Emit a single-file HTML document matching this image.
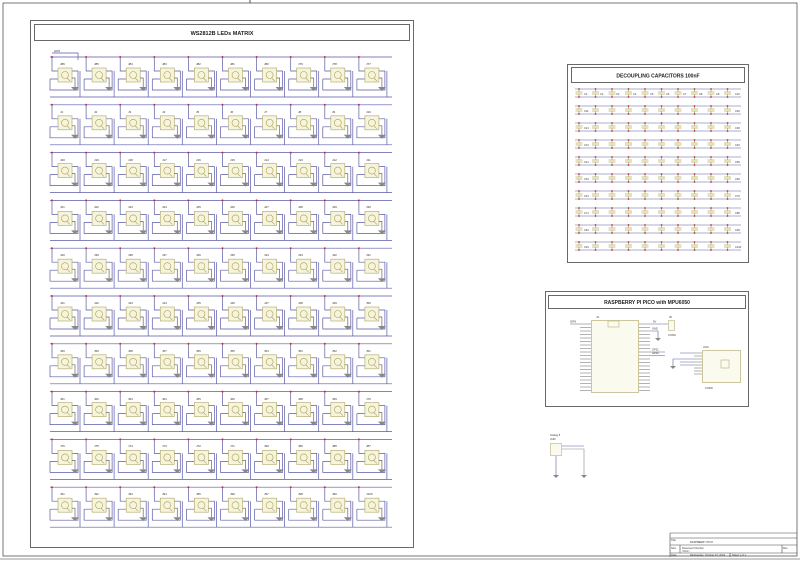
<!DOCTYPE html>
<html><head><meta charset="utf-8"><style>
html,body{margin:0;padding:0;background:#fff}
svg{display:block;font-family:"Liberation Sans",sans-serif}
</style></head><body>
<svg width="800" height="562" viewBox="0 0 800 562" xmlns="http://www.w3.org/2000/svg">
<defs>
<g id="cell">
 <path d="M-6,-11V3H0M-8,11H0M-8,11V22H20V3H14M22,3V29" fill="none" stroke="#5a5aa8" stroke-width="0.7"/>
 <rect x="0" y="0" width="14" height="14" fill="#f6f4da" stroke="#b8b07a" stroke-width="0.7"/>
 <circle cx="7" cy="7" r="3.5" fill="none" stroke="#a89e60" stroke-width="0.6"/>
 <path d="M9,10L12,13" stroke="#a89e60" stroke-width="0.6"/>
 <path d="M14,10H17V19" stroke="#666" stroke-width="0.7" fill="none"/>
 <path d="M13,19H21L17,23Z" fill="#888"/>
 <circle cx="-6" cy="-11" r="1" fill="#c03040"/>
</g>
<g id="row">
 <path d="M50,-11H392M50,29H392" stroke="#5a5aa8" stroke-width="0.7"/>
 <use href="#cell" x="58"/><use href="#cell" x="92.1"/><use href="#cell" x="126.2"/><use href="#cell" x="160.3"/><use href="#cell" x="194.4"/><use href="#cell" x="228.5"/><use href="#cell" x="262.6"/><use href="#cell" x="296.7"/><use href="#cell" x="330.8"/><use href="#cell" x="364.9"/>
</g>
<g id="cap">
 <path d="M0,0V3M-3.5,3H3.5M-3.5,5H3.5M0,5V8" stroke="#b8b060" stroke-width="0.8"/>
 <circle cx="0" cy="0" r="0.9" fill="#c03040"/><circle cx="0" cy="8" r="0.9" fill="#c03040"/>
</g>
<g id="crow">
 <path d="M575,0H741M575,8H741" stroke="#5a5aa8" stroke-width="0.6"/>
 <use href="#cap" x="579"/><use href="#cap" x="595.5"/><use href="#cap" x="612"/><use href="#cap" x="628.5"/><use href="#cap" x="645"/><use href="#cap" x="661.5"/><use href="#cap" x="678"/><use href="#cap" x="694.5"/><use href="#cap" x="711"/><use href="#cap" x="727.5"/>
</g>
</defs>
<rect x="3" y="3" width="794" height="553" fill="none" stroke="#555" stroke-width="0.8"/>
<line x1="0" y1="559" x2="800" y2="559" stroke="#999" stroke-width="1"/>
<line x1="250" y1="0" x2="250" y2="3" stroke="#555"/>
<rect x="30.5" y="20.5" width="383" height="527" fill="none" stroke="#444" stroke-width="0.8"/>
<rect x="34.5" y="24.5" width="375" height="16" fill="none" stroke="#444" stroke-width="0.8"/>
<text x="222" y="35" font-size="5.5" font-weight="bold" text-anchor="middle" fill="#222">WS2812B LEDs MATRIX</text>
<path d="M52,53H78V60" stroke="#5a5aa8" stroke-width="0.7" fill="none"/>
<text x="54" y="52" font-size="3" fill="#333">GP6</text>
<g font-size="3" fill="#333">
<use href="#row" y="68"/><use href="#row" y="115.8"/><use href="#row" y="163.6"/><use href="#row" y="211.4"/><use href="#row" y="259.2"/><use href="#row" y="307"/><use href="#row" y="354.8"/><use href="#row" y="402.6"/><use href="#row" y="450.4"/><use href="#row" y="498.2"/>
<text x="60" y="65">J86</text><text x="94" y="65">J85</text><text x="128" y="65">J84</text><text x="162" y="65">J83</text><text x="196" y="65">J82</text><text x="230" y="65">J81</text><text x="264" y="65">J80</text><text x="298" y="65">J79</text><text x="332" y="65">J78</text><text x="366" y="65">J77</text>
<text x="60" y="113">J1</text><text x="94" y="113">J2</text><text x="128" y="113">J3</text><text x="162" y="113">J4</text><text x="196" y="113">J5</text><text x="230" y="113">J6</text><text x="264" y="113">J7</text><text x="298" y="113">J8</text><text x="332" y="113">J9</text><text x="366" y="113">J10</text>
<text x="60" y="161">J20</text><text x="94" y="161">J19</text><text x="128" y="161">J18</text><text x="162" y="161">J17</text><text x="196" y="161">J16</text><text x="230" y="161">J15</text><text x="264" y="161">J14</text><text x="298" y="161">J13</text><text x="332" y="161">J12</text><text x="366" y="161">J11</text>
<text x="60" y="208">J21</text><text x="94" y="208">J22</text><text x="128" y="208">J23</text><text x="162" y="208">J24</text><text x="196" y="208">J25</text><text x="230" y="208">J26</text><text x="264" y="208">J27</text><text x="298" y="208">J28</text><text x="332" y="208">J29</text><text x="366" y="208">J30</text>
<text x="60" y="256">J40</text><text x="94" y="256">J39</text><text x="128" y="256">J38</text><text x="162" y="256">J37</text><text x="196" y="256">J36</text><text x="230" y="256">J35</text><text x="264" y="256">J34</text><text x="298" y="256">J33</text><text x="332" y="256">J32</text><text x="366" y="256">J31</text>
<text x="60" y="304">J41</text><text x="94" y="304">J42</text><text x="128" y="304">J43</text><text x="162" y="304">J44</text><text x="196" y="304">J45</text><text x="230" y="304">J46</text><text x="264" y="304">J47</text><text x="298" y="304">J48</text><text x="332" y="304">J49</text><text x="366" y="304">J50</text>
<text x="60" y="352">J60</text><text x="94" y="352">J59</text><text x="128" y="352">J58</text><text x="162" y="352">J57</text><text x="196" y="352">J56</text><text x="230" y="352">J55</text><text x="264" y="352">J54</text><text x="298" y="352">J53</text><text x="332" y="352">J52</text><text x="366" y="352">J51</text>
<text x="60" y="400">J61</text><text x="94" y="400">J62</text><text x="128" y="400">J63</text><text x="162" y="400">J64</text><text x="196" y="400">J65</text><text x="230" y="400">J66</text><text x="264" y="400">J67</text><text x="298" y="400">J68</text><text x="332" y="400">J69</text><text x="366" y="400">J70</text>
<text x="60" y="447">J76</text><text x="94" y="447">J75</text><text x="128" y="447">J74</text><text x="162" y="447">J73</text><text x="196" y="447">J72</text><text x="230" y="447">J71</text><text x="264" y="447">J90</text><text x="298" y="447">J89</text><text x="332" y="447">J88</text><text x="366" y="447">J87</text>
<text x="60" y="495">J91</text><text x="94" y="495">J92</text><text x="128" y="495">J93</text><text x="162" y="495">J94</text><text x="196" y="495">J95</text><text x="230" y="495">J96</text><text x="264" y="495">J97</text><text x="298" y="495">J98</text><text x="332" y="495">J99</text><text x="366" y="495">J100</text>
</g>
<rect x="567.5" y="64.5" width="181" height="198" fill="none" stroke="#444" stroke-width="0.8"/>
<rect x="571.5" y="67.5" width="173" height="15" fill="none" stroke="#444" stroke-width="0.8"/>
<text x="658" y="77.5" font-size="5" font-weight="bold" text-anchor="middle" fill="#222">DECOUPLING CAPACITORS 100nF</text>
<g font-size="2.6" fill="#333">
<use href="#crow" y="89"/><use href="#crow" y="106"/><use href="#crow" y="123"/><use href="#crow" y="140"/><use href="#crow" y="157"/><use href="#crow" y="174"/><use href="#crow" y="191"/><use href="#crow" y="208"/><use href="#crow" y="225"/><use href="#crow" y="242"/>
<text x="584" y="95">C1</text><text x="600" y="95">C2</text><text x="616" y="95">C3</text><text x="633" y="95">C4</text><text x="650" y="95">C5</text><text x="666" y="95">C6</text><text x="683" y="95">C7</text><text x="699" y="95">C8</text><text x="716" y="95">C9</text><text x="735" y="95">C10</text>
<text x="584" y="112">C11</text><text x="735" y="112">C20</text><text x="584" y="129">C21</text><text x="735" y="129">C30</text><text x="584" y="146">C31</text><text x="735" y="146">C40</text><text x="584" y="163">C41</text><text x="735" y="163">C50</text><text x="584" y="180">C51</text><text x="735" y="180">C60</text><text x="584" y="197">C61</text><text x="735" y="197">C70</text><text x="584" y="214">C71</text><text x="735" y="214">C80</text><text x="584" y="231">C81</text><text x="735" y="231">C90</text><text x="584" y="248">C91</text><text x="735" y="248">C100</text>
</g>
<rect x="545.5" y="291.5" width="203" height="115" fill="none" stroke="#444" stroke-width="0.8"/>
<rect x="548.5" y="295.5" width="197" height="13" fill="none" stroke="#444" stroke-width="0.8"/>
<text x="647" y="304" font-size="5" font-weight="bold" text-anchor="middle" fill="#222">RASPBERRY PI PICO with MPU6050</text>
<rect x="591.5" y="320.5" width="47" height="72" fill="#fbfaee" stroke="#b8b07a" stroke-width="0.7"/>
<rect x="608" y="321" width="11" height="6" fill="none" stroke="#b8b07a" stroke-width="0.6"/>
<g stroke="#666" stroke-width="0.5">
<path d="M580,324H591M580,327.5H591M580,331H591M580,334.5H591M580,338H591M580,341.5H591M580,345H591M580,348.5H591M580,352H591M580,355.5H591M580,359H591M580,362.5H591M580,366H591M580,369.5H591M580,373H591M580,376.5H591M580,380H591M580,383.5H591M580,387H591M580,390.5H591"/>
<path d="M639,324H650M639,327.5H650M639,331H650M639,334.5H650M639,338H650M639,341.5H650M639,345H650M639,348.5H650M639,352H650M639,355.5H650M639,359H650M639,362.5H650M639,366H650M639,369.5H650M639,373H650M639,376.5H650M639,380H650M639,383.5H650M639,387H650M639,390.5H650"/>
</g>
<path d="M570,324H580M650,324H668M650,331H658V338M650,352H665M650,355.5H665" stroke="#5a5aa8" stroke-width="0.6" fill="none"/>
<path d="M655,338H661L658,341Z" fill="#888"/>
<text x="570" y="322.5" font-size="3" fill="#333">GP6</text><text x="596" y="318" font-size="3" fill="#333">J1</text>
<text x="653" y="322.5" font-size="2.6" fill="#333">5V</text><text x="652" y="329.5" font-size="2.6" fill="#333">GND</text>
<text x="652" y="350.5" font-size="2.6" fill="#333">GP21</text><text x="652" y="354" font-size="2.6" fill="#333">GP20</text>
<rect x="668.5" y="320.5" width="6" height="10" fill="#fbfaee" stroke="#b8b07a" stroke-width="0.6"/>
<text x="669" y="318" font-size="2.6" fill="#333">J8</text><text x="668" y="336" font-size="2.6" fill="#333">CONN</text>
<rect x="702.5" y="350.5" width="38" height="32" fill="#fbfaee" stroke="#b8b07a" stroke-width="0.7"/>
<rect x="721" y="360" width="8" height="8" fill="none" stroke="#a89e60" stroke-width="0.5"/>
<g stroke="#666" stroke-width="0.5"><path d="M694,353H702M694,356H702M694,359H702M694,362H702M694,365H702M694,368H702M694,371H702M694,374H702"/></g>
<path d="M680,353H694M673,359H694M673,359V366M680,362H694M680,365H694" stroke="#5a5aa8" stroke-width="0.6" fill="none"/>
<path d="M670,366H676L673,369Z" fill="#888"/>
<text x="703" y="348" font-size="2.6" fill="#333">J110</text><text x="705" y="389" font-size="2.6" fill="#333">CONN</text>
<text x="550" y="436" font-size="2.6" fill="#333">Analog 5</text><text x="550" y="440" font-size="2.6" fill="#333">J120</text>
<rect x="550.5" y="443.5" width="11" height="12" fill="#fbfaee" stroke="#b8b07a" stroke-width="0.6"/>
<path d="M562,446H584M556,456V475" stroke="#5a5aa8" stroke-width="0.6" fill="none"/>
<path d="M562,449H584V475" stroke="#888" stroke-width="0.6" fill="none"/>
<path d="M553,475H559L556,478ZM581,475H587L584,478Z" fill="#888"/>
<g stroke="#444" stroke-width="0.6" fill="none">
<path d="M670,533H797M670,538H797M670,545H797M670,553H797M670,533V557M680,545V553M782,545V553M730,553V557"/>
</g>
<g font-size="2.6" fill="#333">
<text x="671" y="541">Title</text><text x="690" y="543">RASPBERRY PICO</text>
<text x="671" y="549">Size</text><text x="682" y="549">Document Number</text><text x="682" y="552">&lt;Doc&gt;</text><text x="783" y="549">Rev</text>
<text x="671" y="556">Date</text><text x="690" y="556">Wednesday, October 23, 2024</text><text x="732" y="556">Sheet 1 of 1</text>
</g>
</svg>
</body></html>
